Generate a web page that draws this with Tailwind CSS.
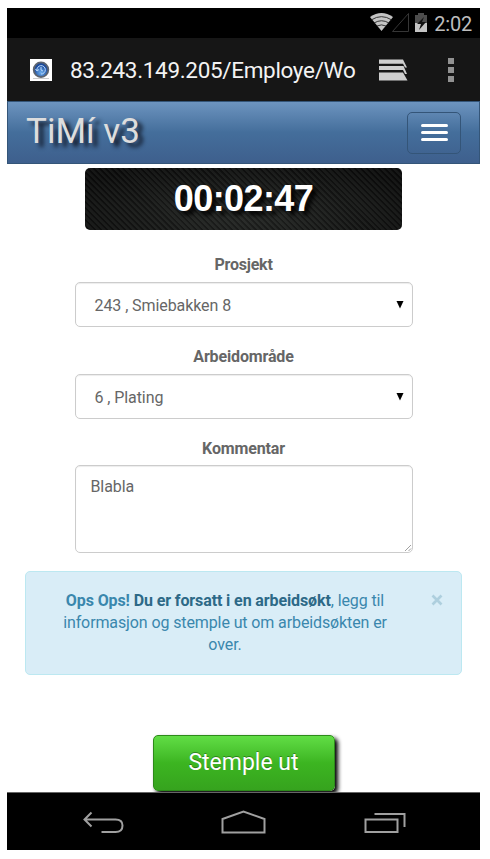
<!DOCTYPE html>
<html lang="no">
<head>
<meta charset="utf-8">
<title>TiMí v3</title>
<script src="https://cdn.jsdelivr.net/npm/@tailwindcss/browser@4"></script>
</head>
<body class="bg-white w-[490px] h-[859px] overflow-hidden pl-[7px] pt-2 font-[Roboto,sans-serif]">
<div class="w-[473px] h-[842px] flex flex-col overflow-hidden bg-white">
  <!-- status bar -->
  <div class="h-[30px] shrink-0 bg-black flex items-center justify-end pr-[8px] text-[#bdbdbd]">
    <svg class="w-[60px] h-[22px] mr-[5px]" viewBox="0 0 60 22">
      <path d="M1 5Q12.500 -3 24 5L12.500 19Z" fill="#c4c4c4"/>
      <path d="M2.500 7.800Q12.500 1.500 22.500 7.800M5 11Q12.500 6.500 20 11M8 14Q12.500 11.800 17 14" fill="none" stroke="#222" stroke-width=".9"/>
      <path d="M39.500 1.500V19.500H23.500Z" fill="none" stroke="#363636" stroke-width="1"/>
      <path d="M46 3h3V1h6v2h3v8H46z" fill="#4d4d4d"/><path d="M46 11h12v9H46z" fill="#c4c4c4"/>
      <path d="M55 5L48 12h4l-2 6 7-8h-4z" fill="#111"/>
    </svg>
    <span class="text-[20px] leading-[30px] pt-[2px] tracking-[-0.200px]">2:02</span>
  </div>
  <!-- browser bar -->
  <div class="h-[63px] shrink-0 bg-[#161616] flex items-center pl-[23px]">
    <svg class="w-[22px] h-[22px] shrink-0" viewBox="0 0 22 22">
      <defs><radialGradient id="fav" cy=".7"><stop offset="0" stop-color="#6fb0ee"/><stop offset="1" stop-color="#1b4a9c"/></radialGradient></defs>
      <path fill="#fff" d="M0 0h22v22H0z"/>
      <path d="M3 19.500h16" stroke="#ccc"/>
      <circle cx="11" cy="10.700" r="7.300" fill="url(#fav)" stroke="#5c6470" stroke-width="1.800"/>
      <path d="M7 11.500A4.200 4.200 0 1 1 11 15M5.500 10l1.500 2 2-1.500M11 8v3l2 1" stroke="#b9d9fb" fill="none"/>
    </svg>
    <div class="ml-[18px] w-[286px] text-[22.500px] leading-[30px] tracking-[-0.330px] text-[#f3f3f3] whitespace-nowrap pt-[1px]">83.243.149.205/Employe/Wo</div>
    <svg class="ml-[23px] w-[30px] h-[24px] shrink-0" viewBox="0 0 30 24">
      <path d="M0 1.500H24L28 9.500H26L24 5.800H0ZM0 8H24.500L28 16H26L24 12H0ZM0 14.500H24L28.500 22.500H0Z" fill="#cecece"/>
    </svg>
    <svg class="ml-[38px] w-[8px] h-[26px] shrink-0" viewBox="0 0 8 26"><path d="M1 1h6v6H1zM1 10h6v6H1zM1 19h6v6H1z" fill="#929292"/></svg>
  </div>
  <!-- navbar -->
  <div class="h-[63px] shrink-0 bg-linear-to-b from-[#6d94bf] via-[#446e9b] to-[#3e5f8d] border border-[#345578] flex items-center justify-between pl-[18px] pr-[18px]">
    <div class="text-[35px] leading-[44px] pb-[2px] font-normal text-[#dddddd] [text-shadow:5px_4px_4px_#111827]">TiMí v3</div>
    <div class="w-[54px] h-[42px] rounded-[5px] border border-[#345578] flex flex-col items-center justify-center gap-[4.500px]">
      <i class="w-[27px] h-[2.700px] rounded bg-white"></i><i class="w-[27px] h-[2.700px] rounded bg-white"></i><i class="w-[27px] h-[2.700px] rounded bg-white"></i>
    </div>
  </div>
  <!-- page -->
  <main class="h-[629px] shrink-0 flex flex-col items-center overflow-hidden pt-[4px] border-b border-[#666] text-[16px] leading-[22px] text-[#666]">
    <div class="w-[317px] h-[62px] shrink-0 rounded-[5px] flex items-center justify-center bg-[radial-gradient(ellipse_at_50%_75%,#2e312e88_0%,#08080899_85%),repeating-linear-gradient(45deg,#2b2d2b_0px,#2b2d2b_2px,#0d0d0d_3px,#0d0d0d_4.200px)]">
      <span class="text-[36px] leading-[42px] font-bold tracking-[-0.600px] text-white font-['Liberation_Sans',sans-serif] [text-shadow:4px_4px_4px_#000]">00:02:47</span>
    </div>
    <div class="mt-[24px] font-bold tracking-[-0.220px]">Prosjekt</div>
    <div class="mt-[6px] w-[338px] h-[45px] shrink-0 rounded-[5px] border border-[#ccc] shadow-[inset_0_1px_1px_#00000013] flex items-center justify-between pl-[19px] pr-[8px]"><span class="pt-[2px] tracking-[-0.080px]">243 , Smiebakken 8</span><svg class="w-[8px] h-[8px]" viewBox="0 0 8 8"><path d="M.5 0h7L4 7.500z" fill="#000"/></svg></div>
    <div class="mt-[19px] font-bold tracking-[-0.150px]">Arbeidområde</div>
    <div class="mt-[6px] w-[338px] h-[45px] shrink-0 rounded-[5px] border border-[#ccc] shadow-[inset_0_1px_1px_#00000013] flex items-center justify-between pl-[19px] pr-[8px]"><span class="pt-[2px] tracking-[-0.080px]">6 , Plating</span><svg class="w-[8px] h-[8px]" viewBox="0 0 8 8"><path d="M.5 0h7L4 7.500z" fill="#000"/></svg></div>
    <div class="mt-[19px] font-bold tracking-[-0.150px]">Kommentar</div>
    <div class="mt-[5px] w-[338px] h-[88px] shrink-0 rounded-[5px] border border-[#ccc] shadow-[inset_0_1px_1px_#00000013] flex justify-between pl-[15px] pt-[10px]"><span class="tracking-[-0.100px]">Blabla</span><svg class="self-end w-[7px] h-[7px]" viewBox="0 0 7 7"><path d="M0 6L6 0M3.500 6L6 3.500" stroke="#888" stroke-width=".8"/></svg></div>
    <div class="mt-[18px] w-[437px] h-[104px] shrink-0 rounded-[5px] border border-[#bce8f1] bg-[#d9edf7] text-[#3a87ad] flex pt-[18px] pl-[19px] pr-[18px]">
      <p class="w-[360px] text-center whitespace-nowrap tracking-[-0.110px]"><b>Ops Ops! <span class="text-[#2d6987]">Du er forsatt i en arbeidsøkt</span></b>, legg til<br>informasjon og stemple ut om arbeidsøkten er<br>over.</p>
      <svg class="ml-auto mt-[4px] w-[12px] h-[12px]" viewBox="0 0 12 12"><path d="M1.500 1.500l9 9M10.500 1.500l-9 9" stroke="#aecfde" stroke-width="2.700"/></svg>
    </div>
    <div class="mt-[60px] w-[182px] h-[56px] shrink-0 rounded-[5px] border border-[#2d8a1a] bg-linear-to-b from-[#61dd45] via-[#3cb521] to-[#36a31e] shadow-[3px_3px_4px_#000] flex items-center justify-center text-white text-[23px] leading-[30px] [text-shadow:0_-1px_0_#0005]">Stemple ut</div>
  </main>
  <!-- system navigation -->
  <div class="h-[57px] shrink-0 bg-black flex items-center pl-[76px] pt-[2px]">
    <svg class="w-[42px] h-[24px]" viewBox="0 0 42 24" fill="none" stroke="#a0a0a0" stroke-width="2"><path d="M8.500 1.500L1.500 8.500L8.500 15.500M1.500 8.500H32.500Q39.500 8.500 39.500 14.500Q39.500 21 32.500 21H18.500"/></svg>
    <svg class="ml-[95px] w-[48px] h-[26px]" viewBox="0 0 48 26" fill="none" stroke="#a0a0a0" stroke-width="2"><path d="M2.500 22.500V9L23.500 1.500L44.500 9V22.500Z"/></svg>
    <svg class="ml-[96px] w-[43px] h-[24px]" viewBox="0 0 43 24" fill="none" stroke="#a0a0a0" stroke-width="2"><path d="M1.500 8.500H33.500V21H1.500ZM10.500 3H40.500V16"/></svg>
  </div>
</div>
</body>
</html>
